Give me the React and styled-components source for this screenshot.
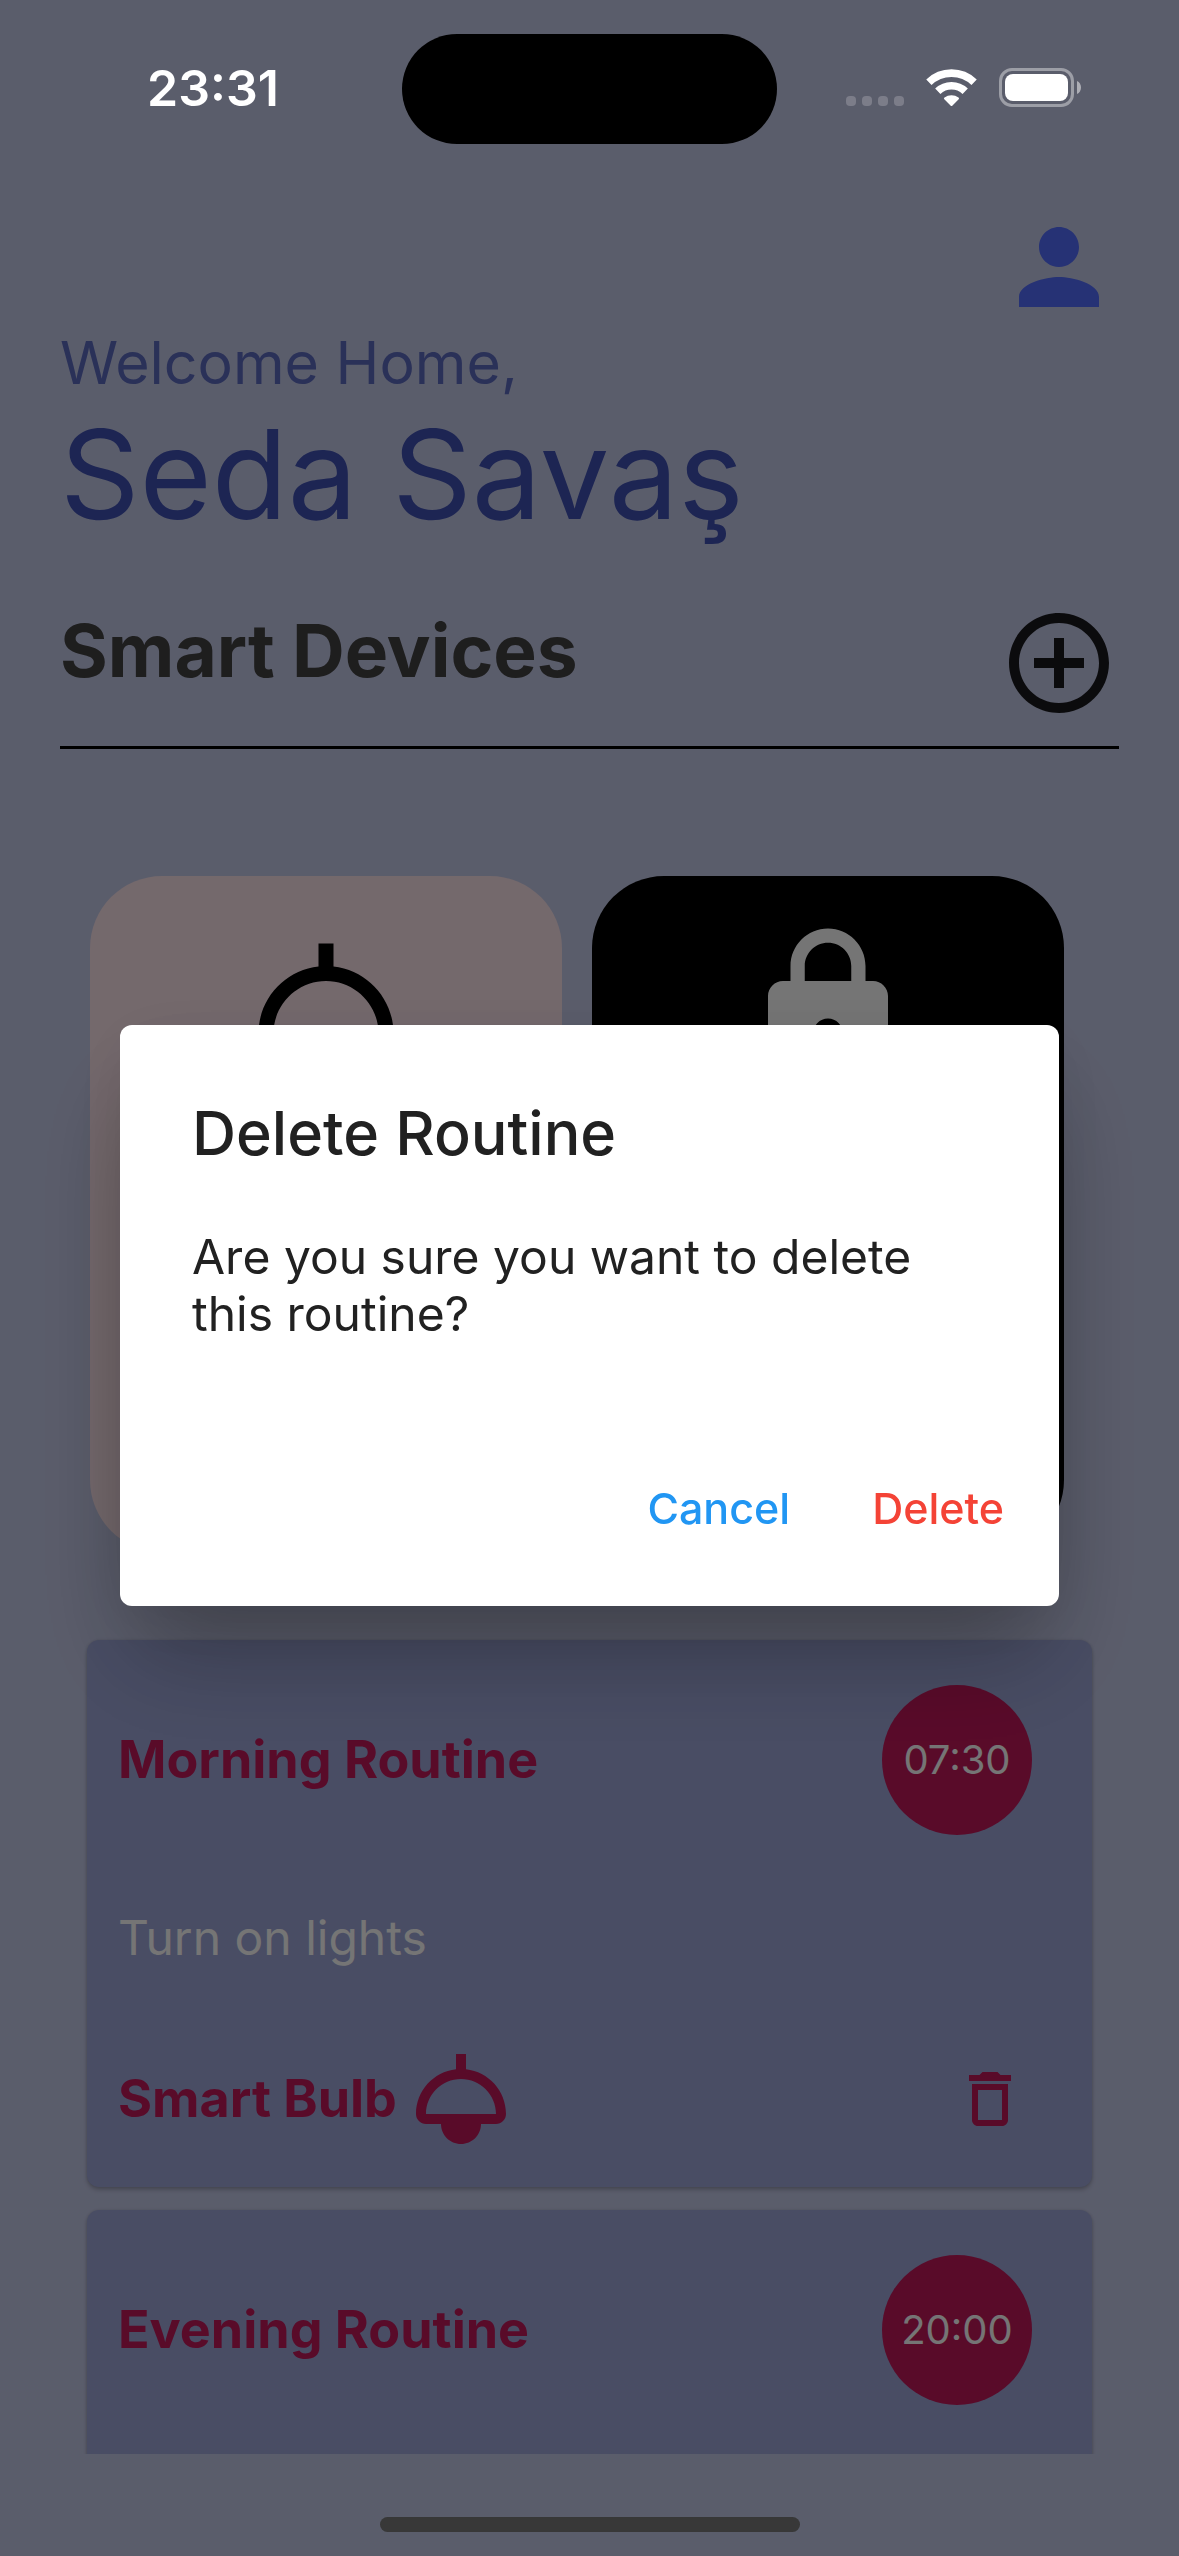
import React from "react";
import styled, { createGlobalStyle } from "styled-components";

const GlobalStyle = createGlobalStyle`
  *, *::before, *::after { box-sizing: border-box; }
  body {
    margin: 0;
    background: #c5cae9;
    font-family: Inter, "Liberation Sans", sans-serif;
  }
  h1, h2, h3, p { margin: 0; font-weight: 400; }
  button {
    margin: 0;
    padding: 0;
    border: 0;
    background: none;
    color: inherit;
    font: inherit;
    cursor: pointer;
  }
  svg { display: block; }
`;

const Screen = styled.div`
  height: 100vh;
  padding-bottom: 102px;
  display: flex;
  flex-direction: column;
  overflow: hidden;
  background: #c5cae9;
`;

const StatusBar = styled.div`
  position: fixed;
  inset: 0 0 auto;
  z-index: 3;
  height: 177px;
  padding: 34px 98px 0 147px;
  display: grid;
  grid-template-columns: 1fr auto 1fr;
  align-items: start;
  color: #fff;
`;

const Clock = styled.time`
  padding-top: 24px;
  font-size: 50px;
  line-height: 60px;
  font-weight: 600;
`;

const Island = styled.div`
  width: 375px;
  height: 110px;
  margin-right: 49px;
  border-radius: 55px;
  background: #000;
`;

const Signals = styled.div`
  padding-top: 34px;
  display: flex;
  justify-content: flex-end;
  align-items: flex-start;
  gap: 22px;
`;

const HomeIndicator = styled.div`
  position: fixed;
  left: 50%;
  bottom: 24px;
  z-index: 3;
  width: 420px;
  height: 15px;
  margin-left: -210px;
  border-radius: 8px;
  background: #383838;
`;

const Header = styled.header`
  padding: 207px 60px 0;
  display: flex;
  flex-direction: column;
`;

const ProfileButton = styled.button`
  align-self: flex-end;
  color: #536dfe;
`;

const Greeting = styled.p`
  font-size: 59px;
  line-height: 72px;
  color: #5c6bc0;
`;

const UserName = styled.h1`
  font-size: 124px;
  line-height: 150px;
  color: #3f51b5;
`;

const SectionBar = styled.div`
  margin: 54px 60px 0;
  padding-bottom: 23px;
  display: flex;
  justify-content: space-between;
  align-items: flex-start;
  border-bottom: 3px solid #000;
`;

const SectionTitle = styled.h2`
  font-size: 73px;
  line-height: 96px;
  font-weight: 700;
  color: #424242;
`;

const AddButton = styled.button`
  color: rgba(0, 0, 0, 0.87);
`;

const Devices = styled.section`
  padding: 127px 115px 0 90px;
  display: grid;
  grid-template-columns: 1fr 1fr;
  gap: 30px;
`;

const DeviceCard = styled.article`
  height: 676px;
  padding-top: 45px;
  display: flex;
  justify-content: center;
  align-items: flex-start;
  border-radius: 72px;
  background: ${(p) => (p.$dark ? "#000" : "#fce4ec")};
  color: ${(p) => (p.$dark ? "#fff" : "#000")};
`;

const Routines = styled.section`
  flex: 1;
  min-height: 0;
  margin-top: 84px;
  padding: 4px 87px 0;
  display: flex;
  flex-direction: column;
  gap: 23px;
  overflow: hidden;
`;

const RoutineCard = styled.article`
  flex: none;
  padding: 45px 30px 16px 31px;
  border-radius: 12px;
  background: #9fa8da;
  box-shadow: 0 3px 4px rgba(0, 0, 0, 0.2), 0 0 3px rgba(0, 0, 0, 0.12);
  color: #c2185b;
`;

const RoutineRow = styled.div`
  display: flex;
  align-items: center;
  justify-content: space-between;
`;

const RoutineTitle = styled.h3`
  display: flex;
  align-items: center;
  gap: 4px;
  font-size: 52px;
  line-height: 60px;
  font-weight: 700;
`;

const TimeBadge = styled.time`
  width: 150px;
  height: 150px;
  margin-right: 30px;
  display: flex;
  align-items: center;
  justify-content: center;
  border-radius: 50%;
  background: #c2185b;
  color: #fff;
  font-size: 40px;
  line-height: 48px;
`;

const RoutineAction = styled.p`
  margin: 73px 0 59px;
  font-size: 48px;
  line-height: 60px;
  color: #fff;
`;

const DeleteIconButton = styled.button`
  && {
    padding: 36px;
  }
`;

const Barrier = styled.div`
  position: fixed;
  inset: 0;
  z-index: 2;
  padding: 177px 120px 102px;
  display: flex;
  align-items: center;
  background: rgba(0, 0, 0, 0.54);
`;

const Dialog = styled.div`
  flex: 1;
  padding: 72px 24px 24px;
  border-radius: 12px;
  background: #fff;
  color: #212121;
  box-shadow: 0 60px 96px -12px rgba(0, 0, 0, 0.28),
    0 12px 72px rgba(0, 0, 0, 0.08);
`;

const DialogTitle = styled.h2`
  padding: 0 48px;
  font-size: 61px;
  line-height: 72px;
  font-weight: 500;
`;

const DialogText = styled.p`
  padding: 59px 48px 96px;
  font-size: 48px;
  line-height: 57px;
`;

const DialogActions = styled.div`
  display: flex;
  justify-content: flex-end;
  gap: 20px;
`;

const DialogButton = styled.button`
  && {
    height: 144px;
    padding: 0 31px 4px;
    font-size: 43px;
    font-weight: 500;
    color: ${(p) => (p.$danger ? "#f44336" : "#2196f3")};
  }
`;

const ICONS = {
  person:
    "M12 12c2.21 0 4-1.79 4-4s-1.79-4-4-4-4 1.79-4 4 1.79 4 4 4zm0 2c-2.67 0-8 1.34-8 4v2h16v-2c0-2.66-5.33-4-8-4z",
  add: "M13 7h-2v4H7v2h4v4h2v-4h4v-2h-4V7zm-1-5C6.48 2 2 6.48 2 12s4.48 10 10 10 10-4.48 10-10S17.52 2 12 2zm0 18c-4.41 0-8-3.59-8-8s3.59-8 8-8 8 3.59 8 8-3.59 8-8 8z",
  lamp: "M13 6.06V3h-2v3.06c-4.5.5-8 4.31-8 8.93C3 16.1 3.9 17 5.01 17H8c0 2.21 1.79 4 4 4s4-1.79 4-4h2.99c1.11 0 2.01-.9 2.01-2.01 0-4.62-3.5-8.43-8-8.93zM12 15H5c0-3.86 3.14-7 7-7s7 3.14 7 7h-7z",
  lock: "M18 8h-1V6c0-2.76-2.24-5-5-5S7 3.24 7 6v2H6c-1.1 0-2 .9-2 2v10c0 1.1.9 2 2 2h12c1.1 0 2-.9 2-2V10c0-1.1-.9-2-2-2zm-6 9c-1.1 0-2-.9-2-2s.9-2 2-2 2 .9 2 2-.9 2-2 2zm3.1-9H8.9V6c0-1.71 1.39-3.1 3.1-3.1 1.71 0 3.1 1.39 3.1 3.1v2z",
  trash:
    "M6 19c0 1.1.9 2 2 2h8c1.1 0 2-.9 2-2V7H6v12zM8 9h8v10H8V9zm7.5-5l-1-1h-5l-1 1H5v2h14V4h-3.5z",
};

function Icon({ name, size }) {
  return (
    <svg
      width={size}
      height={size}
      viewBox="0 0 24 24"
      fill="currentColor"
      aria-hidden="true"
    >
      <path d={ICONS[name]} />
    </svg>
  );
}

function NoSignal() {
  return (
    <svg width="58" height="39" viewBox="0 0 58 39" fill="#fff" opacity="0.2">
      {[0, 16, 32, 48].map((x) => (
        <rect key={x} x={x} y="28" width="10" height="10" rx="4" />
      ))}
    </svg>
  );
}

function Wifi() {
  return (
    <svg width="51" height="39" viewBox="0 0 51 39" fill="none">
      <g stroke="#fff" strokeWidth="7.6">
        <path d="M2.9 14.2A32.6 32.6 0 0 1 48.1 14.2" />
        <path d="M11.8 23.2A19.8 19.8 0 0 1 39.2 23.2" />
      </g>
      <path
        d="M18.3 31.2Q17.4 30.3 18.5 29.5A12 12 0 0 1 32.5 29.5Q33.6 30.3 32.7 31.2L26.5 37.4Q25.5 38.4 24.5 37.4Z"
        fill="#fff"
      />
    </svg>
  );
}

function Battery() {
  return (
    <svg width="82" height="39" viewBox="0 0 82 39" fill="none">
      <rect
        x="1.5"
        y="1.5"
        width="72"
        height="36"
        rx="11.5"
        stroke="#fff"
        strokeOpacity="0.4"
        strokeWidth="3"
      />
      <rect x="6" y="6" width="63" height="27" rx="8" fill="#fff" />
      <path d="M78 13c2.500 1 4 3.600 4 6.500s-1.500 5.500-4 6.500z" fill="#fff" fillOpacity="0.5" />
    </svg>
  );
}

const routines = [
  {
    name: "Morning Routine",
    time: "07:30",
    action: "Turn on lights",
    device: "Smart Bulb",
  },
  { name: "Evening Routine", time: "20:00" },
];

function Routine({ name, time, action, device }) {
  return (
    <RoutineCard>
      <RoutineRow>
        <RoutineTitle>{name}</RoutineTitle>
        <TimeBadge>{time}</TimeBadge>
      </RoutineRow>
      <RoutineAction>{action}</RoutineAction>
      {device && (
        <RoutineRow>
          <RoutineTitle>
            {device}
            <Icon name="lamp" size={120} />
          </RoutineTitle>
          <DeleteIconButton aria-label={`Delete ${name}`}>
            <Icon name="trash" size={72} />
          </DeleteIconButton>
        </RoutineRow>
      )}
    </RoutineCard>
  );
}

export default function App() {
  return (
    <>
      <GlobalStyle />
      <StatusBar>
        <Clock>23:31</Clock>
        <Island />
        <Signals>
          <NoSignal />
          <Wifi />
          <Battery />
        </Signals>
      </StatusBar>

      <Screen>
        <Header>
          <ProfileButton aria-label="Profile">
            <Icon name="person" size={120} />
          </ProfileButton>
          <Greeting>Welcome Home,</Greeting>
          <UserName>Seda Savaş</UserName>
        </Header>
        <SectionBar>
          <SectionTitle>Smart Devices</SectionTitle>
          <AddButton aria-label="Add device">
            <Icon name="add" size={120} />
          </AddButton>
        </SectionBar>
        <Devices>
          <DeviceCard>
            <Icon name="lamp" size={180} />
          </DeviceCard>
          <DeviceCard $dark>
            <Icon name="lock" size={180} />
          </DeviceCard>
        </Devices>
        <Routines>
          {routines.map((routine) => (
            <Routine key={routine.name} {...routine} />
          ))}
        </Routines>
      </Screen>

      <Barrier>
        <Dialog role="alertdialog" aria-modal="true" aria-labelledby="dialog-title">
          <DialogTitle id="dialog-title">Delete Routine</DialogTitle>
          <DialogText>Are you sure you want to delete this routine?</DialogText>
          <DialogActions>
            <DialogButton>Cancel</DialogButton>
            <DialogButton $danger>Delete</DialogButton>
          </DialogActions>
        </Dialog>
      </Barrier>
      <HomeIndicator />
    </>
  );
}
